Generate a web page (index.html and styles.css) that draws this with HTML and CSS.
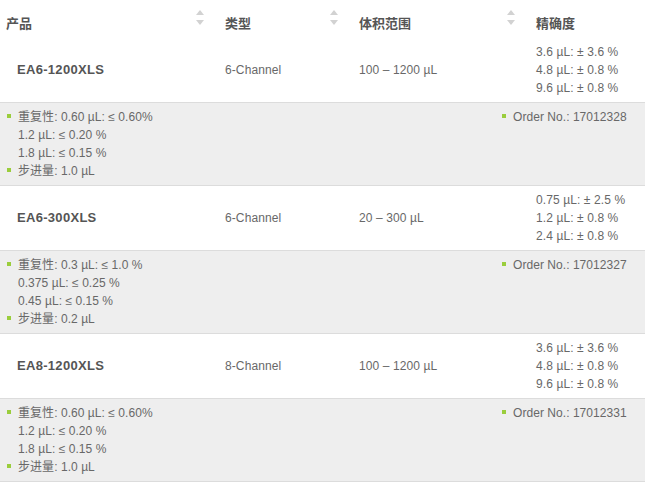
FILE: index.html
```html
<!DOCTYPE html>
<html lang="zh">
<head>
<meta charset="utf-8">
<title>产品</title>
<link rel="stylesheet" href="styles.css">
</head>
<body>
<table class="spec">
  <colgroup>
    <col class="c1"><col class="c2"><col class="c3"><col class="c4">
  </colgroup>
  <thead>
    <tr>
      <th><span class="label">产品</span><span class="sort"><i class="up"></i><i class="down"></i></span></th>
      <th><span class="label">类型</span><span class="sort"><i class="up"></i><i class="down"></i></span></th>
      <th><span class="label">体积范围</span><span class="sort"><i class="up"></i><i class="down"></i></span></th>
      <th><span class="label">精确度</span></th>
    </tr>
  </thead>
  <tbody>
    <tr class="main">
      <td class="name">EA6-1200XLS</td>
      <td>6-Channel</td>
      <td>100 – 1200 µL</td>
      <td>3.6 µL: ± 3.6 %<br>4.8 µL: ± 0.8 %<br>9.6 µL: ± 0.8 %</td>
    </tr>
    <tr class="detail">
      <td colspan="4">
        <div class="detail-grid">
          <ul class="list">
            <li>重复性: 0.60 µL: ≤ 0.60%<br>1.2 µL: ≤ 0.20 %<br>1.8 µL: ≤ 0.15 %</li>
            <li>步进量: 1.0 µL</li>
          </ul>
          <ul class="list">
            <li>Order No.: 17012328</li>
          </ul>
        </div>
      </td>
    </tr>
    <tr class="main">
      <td class="name">EA6-300XLS</td>
      <td>6-Channel</td>
      <td>20 – 300 µL</td>
      <td>0.75 µL: ± 2.5 %<br>1.2 µL: ± 0.8 %<br>2.4 µL: ± 0.8 %</td>
    </tr>
    <tr class="detail">
      <td colspan="4">
        <div class="detail-grid">
          <ul class="list">
            <li>重复性: 0.3 µL: ≤ 1.0 %<br>0.375 µL: ≤ 0.25 %<br>0.45 µL: ≤ 0.15 %</li>
            <li>步进量: 0.2 µL</li>
          </ul>
          <ul class="list">
            <li>Order No.: 17012327</li>
          </ul>
        </div>
      </td>
    </tr>
    <tr class="main">
      <td class="name">EA8-1200XLS</td>
      <td>8-Channel</td>
      <td>100 – 1200 µL</td>
      <td>3.6 µL: ± 3.6 %<br>4.8 µL: ± 0.8 %<br>9.6 µL: ± 0.8 %</td>
    </tr>
    <tr class="detail">
      <td colspan="4">
        <div class="detail-grid">
          <ul class="list">
            <li>重复性: 0.60 µL: ≤ 0.60%<br>1.2 µL: ≤ 0.20 %<br>1.8 µL: ≤ 0.15 %</li>
            <li>步进量: 1.0 µL</li>
          </ul>
          <ul class="list">
            <li>Order No.: 17012331</li>
          </ul>
        </div>
      </td>
    </tr>
  </tbody>
</table>
</body>
</html>
```
FILE: styles.css
```css
html, body {
  margin: 0;
  padding: 0;
  background: #ffffff;
}
body {
  font-family: "Liberation Sans", Arial, "Noto Sans CJK SC", sans-serif;
  font-size: 12px;
  color: #686868;
}
.spec {
  width: 645px;
  border-collapse: collapse;
  table-layout: fixed;
}
.c1 { width: 219px; }
.c2 { width: 134px; }
.c3 { width: 177px; }
.c4 { width: 115px; }

.spec th {
  position: relative;
  height: 38px;
  box-sizing: border-box;
  padding: 14px 0 0 6px;
  text-align: left;
  vertical-align: top;
  font-family: "Noto Sans CJK SC", sans-serif;
  font-size: 13px;
  line-height: 18px;
  font-weight: bold;
  color: #555555;
}
.sort {
  position: absolute;
  top: 10px;
  right: 16px;
  width: 7px;
  height: 15px;
}
.sort i {
  position: absolute;
  left: 0;
  width: 0;
  height: 0;
  border-left: 4px solid transparent;
  border-right: 4px solid transparent;
}
.sort .up {
  top: 0;
  border-bottom: 5px solid #d2d2d2;
}
.sort .down {
  top: 10px;
  border-top: 5px solid #d2d2d2;
}

.main td {
  height: 64px;
  box-sizing: border-box;
  padding: 5px 0 5px 6px;
  line-height: 18px;
  vertical-align: middle;
  border-bottom: 1px solid #dcdcdc;
  letter-spacing: 0.1px;
}
.main td.name {
  padding-left: 17px;
  font-size: 13px;
  font-weight: bold;
  color: #555555;
  letter-spacing: 0.3px;
}
.detail td {
  height: 82px;
  box-sizing: border-box;
  padding: 5px 0 5px 7px;
  background: #eeeeee;
  border-bottom: 1px solid #dcdcdc;
  vertical-align: top;
  line-height: 18px;
  letter-spacing: 0.05px;
}
.detail-grid {
  display: grid;
  grid-template-columns: 495px 1fr;
}
.list {
  list-style: none;
  margin: 0;
  padding: 0;
}
.list li {
  position: relative;
  padding-left: 11px;
}
.list li::before {
  content: "";
  position: absolute;
  left: 0;
  top: 6px;
  width: 4px;
  height: 4px;
  background: #9acd3c;
}
```
